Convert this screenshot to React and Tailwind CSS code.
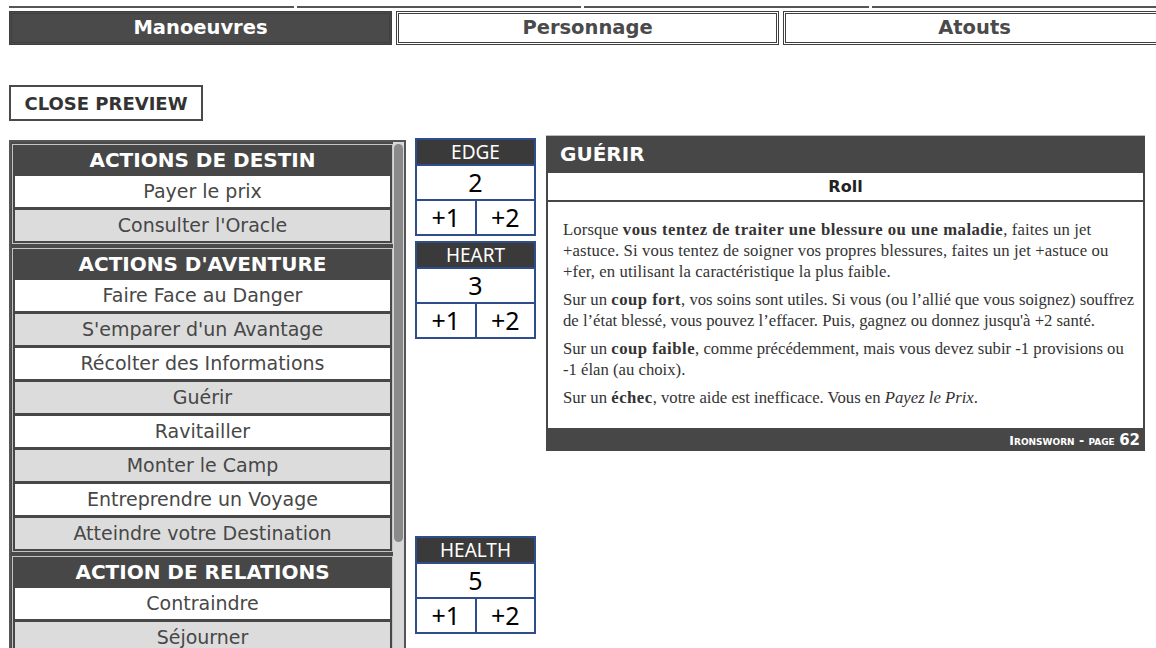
import React from 'react';

const wide = { fontFamily: '"DejaVu Sans", "Open Sans", sans-serif' };
const serif = { fontFamily: '"Liberation Serif", "DejaVu Serif", serif' };
const calibri = { fontFamily: '"Noto Sans", "Liberation Sans", sans-serif' };

const sections = [
  { title: 'ACTIONS DE DESTIN', moves: ['Payer le prix', "Consulter l'Oracle"] },
  {
    title: "ACTIONS D'AVENTURE",
    moves: [
      'Faire Face au Danger',
      "S'emparer d'un Avantage",
      'Récolter des Informations',
      'Guérir',
      'Ravitailler',
      'Monter le Camp',
      'Entreprendre un Voyage',
      'Atteindre votre Destination',
    ],
  },
  { title: 'ACTION DE RELATIONS', moves: ['Contraindre', 'Séjourner', 'Forger un Lien'] },
];

function Tab({ label, active }) {
  return (
    <div
      className={`w-[383px] shrink-0 h-[34px] flex items-center justify-center border-[3px] border-double border-[#3f3f3f] text-[19.5px] font-bold ${
        active ? 'bg-[#4a4a4a] text-white' : 'bg-white text-[#4a4a4a]'
      }`}
    >
      {label}
    </div>
  );
}

function Stat({ label, value, className = '' }) {
  return (
    <div className={`w-[121px] border-2 border-[#2f4d8a] ${className}`} style={calibri}>
      <div className="h-[26px] bg-[#3a3a3a] text-white text-[19px] leading-[24px] text-center border-b-2 border-[#2f4d8a]">
        {label}
      </div>
      <div className="h-[35px] bg-white text-black text-[25px] leading-[33px] text-center border-b-2 border-[#2f4d8a]">
        {value}
      </div>
      <div className="flex h-[33px] bg-white text-black text-[25px] leading-[33px]">
        <div className="flex-1 text-center border-r-2 border-[#2f4d8a]">+1</div>
        <div className="flex-1 text-center">+2</div>
      </div>
    </div>
  );
}

export default function App() {
  return (
    <div className="h-[648px] w-[1156px] overflow-hidden bg-white" style={wide}>
      {/* top rule with small breaks */}
      <div className="flex pt-[6px] pl-[9px] gap-[3px]">
        <div className="w-[287px] h-[2px] bg-[#555]" />
        <div className="w-[287px] h-[2px] bg-[#555]" />
        <div className="w-[287px] h-[2px] bg-[#555]" />
        <div className="w-[287px] h-[2px] bg-[#555]" />
      </div>

      <div className="flex gap-[4px] pl-[9px] mt-[3px]">
        <Tab label="Manoeuvres" active />
        <Tab label="Personnage" />
        <Tab label="Atouts" />
      </div>

      <div className="pl-[9px] mt-[40px]">
        <button className="h-[36px] w-[194px] border-2 border-[#4a4a4a] bg-white text-[#333] text-[18px] font-bold">
          CLOSE PREVIEW
        </button>
      </div>

      <div className="flex items-start mt-[14px] pl-[9px]">
        {/* moves list */}
        <div className="w-[397px] h-[520px] mt-[5px] flex border-2 border-[#555] bg-[#4a4a4a] overflow-hidden">
          <div className="w-[382px] flex flex-col gap-[4px] pl-[1px] pt-[2px]">
            {sections.map((s) => (
              <div key={s.title} className="border border-[#c4c4c4] bg-[#474747] px-[2px] pb-[2px]">
                <div className="h-[31px] text-white text-[20px] font-bold text-center leading-[31px]">{s.title}</div>
                <div className="flex flex-col gap-[3px]">
                  {s.moves.map((m, i) => (
                    <div
                      key={m}
                      className={`h-[31px] text-[19px] text-[#474747] text-center leading-[31px] ${
                        i % 2 === 0 ? 'bg-white' : 'bg-[#dcdcdc]'
                      }`}
                    >
                      {m}
                    </div>
                  ))}
                </div>
              </div>
            ))}
          </div>
          <div className="w-[11px] h-full bg-[#d8d8d8] pt-[2px] pl-[1px]">
            <div className="w-[9px] h-[398px] rounded-full bg-[#8a8a8a]" />
          </div>
        </div>

        {/* stats */}
        <div className="flex flex-col ml-[9px] mt-[3px]">
          <Stat label="EDGE" value="2" />
          <Stat label="HEART" value="3" className="mt-[5px]" />
          <Stat label="HEALTH" value="5" className="mt-[197px]" />
        </div>

        {/* move card */}
        <div className="w-[599px] ml-[10px] border-t border-[#bbb]">
          <div className="h-[37px] bg-[#474747] text-white text-[20px] font-bold leading-[37px] pl-[14px]">GUÉRIR</div>
          <div className="h-[29px] bg-white border-2 border-t-0 border-[#474747] text-[16px] font-bold text-[#222] text-center leading-[27px]">
            Roll
          </div>
          <div
            className="border-x-2 border-[#474747] bg-white pl-[15px] pr-[8px] pt-[17px] pb-[20px] text-[16.7px] leading-[21px] text-[#333] flex flex-col gap-[7px] [&_b]:tracking-[0.5px]"
            style={serif}
          >
            <p className="tracking-[0.12px]">
              Lorsque <b>vous tentez de traiter une blessure ou une maladie</b>, faites un jet +astuce. Si vous tentez de
              soigner vos propres blessures, faites un jet +astuce ou +fer, en utilisant la caractéristique la plus
              faible.
            </p>
            <p>
              Sur un <b>coup fort</b>, vos soins sont utiles. Si vous (ou l’allié que vous soignez) souffrez de l’état
              blessé, vous pouvez l’effacer. Puis, gagnez ou donnez jusqu'à +2 santé.
            </p>
            <p>
              Sur un <b>coup faible</b>, comme précédemment, mais vous devez subir -1 provisions ou -1 élan (au choix).
            </p>
            <p>
              Sur un <b>échec</b>, votre aide est inefficace. Vous en <i>Payez le Prix</i>.
            </p>
          </div>
          <div className="h-[23px] bg-[#474747] text-white text-right pr-[5px] font-bold leading-[23px]">
            <span className="text-[12.5px] [font-variant:small-caps]">Ironsworn - page </span>
            <span className="text-[15px]">62</span>
          </div>
        </div>
      </div>
    </div>
  );
}
